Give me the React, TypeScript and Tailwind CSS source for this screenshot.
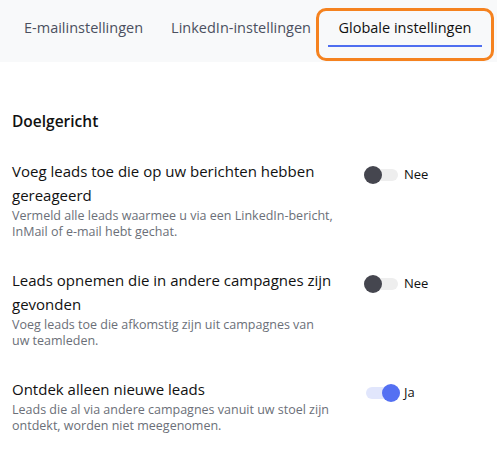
import React from "react";

type Setting = {
  title: string;
  description: string[];
  on: boolean;
};

const settings: Setting[] = [
  {
    title: "Voeg leads toe die op uw berichten hebben gereageerd",
    description: ["Vermeld alle leads waarmee u via een LinkedIn-bericht,", "InMail of e-mail hebt gechat."],
    on: false,
  },
  {
    title: "Leads opnemen die in andere campagnes zijn gevonden",
    description: ["Voeg leads toe die afkomstig zijn uit campagnes van", "uw teamleden."],
    on: false,
  },
  {
    title: "Ontdek alleen nieuwe leads",
    description: ["Leads die al via andere campagnes vanuit uw stoel zijn", "ontdekt, worden niet meegenomen."],
    on: true,
  },
];

function Toggle(props: { on: boolean }) {
  return (
    <div className={props.on ? "flex items-center gap-[4px] pl-[2px]" : "flex items-center gap-[6px]"}>
      <div className="relative h-[12px] w-[34px] rounded-full">
        <div
          className={
            props.on
              ? "absolute inset-0 rounded-full bg-[#e1e6fc]"
              : "absolute inset-0 rounded-full bg-[#eeeeee]"
          }
        />
        <div
          className={
            props.on
              ? "absolute right-0 top-1/2 h-[18px] w-[18px] -translate-y-1/2 rounded-full bg-[#5470f2]"
              : "absolute left-0 top-1/2 h-[18px] w-[18px] -translate-y-1/2 rounded-full bg-[#45464f]"
          }
        />
      </div>
      <span className="text-[13px] text-[#111]">{props.on ? "Ja" : "Nee"}</span>
    </div>
  );
}

export default function App() {
  return (
    <div className="h-[458px] w-[497px] bg-white font-['Open_Sans',sans-serif] text-[#111827]">
      <div className="flex h-[62px] items-start whitespace-nowrap bg-[#f8f9fa] pl-[12px] pt-[8px]">
        <div className="px-[12px] pt-[9px] text-[14.5px] text-[#4b5060]">E-mailinstellingen</div>
        <div className="ml-[4px] pl-[12px] pr-[5px] pt-[9px] text-[14.5px] text-[#4b5060]">
          LinkedIn-instellingen
        </div>
        <div className="flex h-[53px] w-[178px] flex-col rounded-[10px] border-[3px] border-[#f5821f] px-[9px] pt-[6px]">
          <div className="pb-[6px] text-center text-[14.5px] text-[#111]">Globale instellingen</div>
          <div className="h-[2px] bg-[#4f6ef0]" />
        </div>
      </div>

      <div className="px-[12px] pt-[48px]">
        <h2 className="text-[15.5px] font-semibold text-[#111]">Doelgericht</h2>
        <div className="mt-[26px] flex flex-col gap-[28px]">
          {settings.map((s) => (
            <div key={s.title} className="flex items-start">
              <div className="w-[330px]">
                <p className="text-[15px] leading-[24px] text-[#111]">{s.title}</p>
                <p className="mt-[1px] whitespace-nowrap text-[12.5px] leading-[16px] text-[#6b6f78]">
                  {s.description.map((line) => (
                    <span key={line} className="block">
                      {line}
                    </span>
                  ))}
                </p>
              </div>
              <div className="ml-[22px] pt-[6px]">
                <Toggle on={s.on} />
              </div>
            </div>
          ))}
        </div>
      </div>
    </div>
  );
}
